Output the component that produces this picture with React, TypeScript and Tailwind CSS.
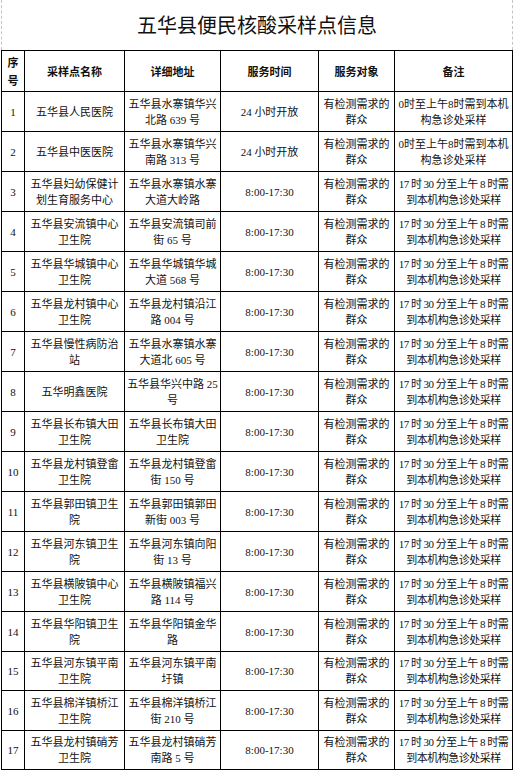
import React from "react";

type Site = {
  name: string[];
  addr: string[];
  allDay?: boolean;
  h?: string;
};

const sites: Site[] = [
  { name: ["五华县人民医院"], addr: ["五华县水寨镇华兴", "北路 639 号"], allDay: true },
  { name: ["五华县中医医院"], addr: ["五华县水寨镇华兴", "南路 313 号"], allDay: true },
  { name: ["五华县妇幼保健计", "划生育服务中心"], addr: ["五华县水寨镇水寨", "大道大岭路"] },
  { name: ["五华县安流镇中心", "卫生院"], addr: ["五华县安流镇司前", "街 65 号"] },
  { name: ["五华县华城镇中心", "卫生院"], addr: ["五华县华城镇华城", "大道 568 号"] },
  { name: ["五华县龙村镇中心", "卫生院"], addr: ["五华县龙村镇沿江", "路 004 号"] },
  { name: ["五华县慢性病防治", "站"], addr: ["五华县水寨镇水寨", "大道北 605 号"] },
  { name: ["五华明鑫医院"], addr: ["五华县华兴中路 25", "号"] },
  { name: ["五华县长布镇大田", "卫生院"], addr: ["五华县长布镇大田", "卫生院"] },
  { name: ["五华县龙村镇登畲", "卫生院"], addr: ["五华县龙村镇登畲", "街 150 号"] },
  { name: ["五华县郭田镇卫生", "院"], addr: ["五华县郭田镇郭田", "新街 003 号"] },
  { name: ["五华县河东镇卫生", "院"], addr: ["五华县河东镇向阳", "街 13 号"] },
  { name: ["五华县横陂镇中心", "卫生院"], addr: ["五华县横陂镇福兴", "路 114 号"] },
  { name: ["五华县华阳镇卫生", "院"], addr: ["五华县华阳镇金华", "路"] },
  { name: ["五华县河东镇平南", "卫生院"], addr: ["五华县河东镇平南", "圩镇"], h: "h-[39px]" },
  { name: ["五华县棉洋镇桥江", "卫生院"], addr: ["五华县棉洋镇桥江", "街 210 号"] },
  { name: ["五华县龙村镇硝芳", "卫生院"], addr: ["五华县龙村镇硝芳", "南路 5 号"], h: "h-[39px]" },
];

function Lines({ lines, tight }: { lines: string[]; tight?: boolean }) {
  return (
    <>
      {lines.map((l, i) => (
        <div key={i} className={tight ? "whitespace-nowrap tracking-[-0.5px]" : "whitespace-nowrap"}>
          {l}
        </div>
      ))}
    </>
  );
}

const cell = "border-r border-b border-black p-0 text-center align-middle";

export default function App() {
  return (
    <div className="w-[514px] min-h-[771px] bg-white text-[#111] [font-family:'Liberation_Serif','Noto_Sans_CJK_SC',serif]">
      <div className="ml-[1px] flex h-[50px] w-[512px] items-center justify-center border-x border-dashed border-[#c4c4c4] text-[20px] [font-family:'Noto_Sans_CJK_SC',sans-serif]">
        五华县便民核酸采样点信息
      </div>
      <table className="ml-[1px] w-[512px] table-fixed border-separate border-spacing-0 border-l border-t border-black text-[11px] leading-[16px]">
        <colgroup>
          <col className="w-[23px]" />
          <col className="w-[100px]" />
          <col className="w-[96px]" />
          <col className="w-[98px]" />
          <col className="w-[76px]" />
          <col className="w-[118px]" />
        </colgroup>
        <thead>
          <tr className="h-[41px] font-bold [font-family:'Noto_Sans_CJK_SC',sans-serif]">
            <th className={`${cell} leading-[18px]`}>
              <div>序</div>
              <div>号</div>
            </th>
            <th className={cell}>采样点名称</th>
            <th className={cell}>详细地址</th>
            <th className={cell}>服务时间</th>
            <th className={cell}>服务对象</th>
            <th className={cell}>备注</th>
          </tr>
        </thead>
        <tbody>
          {sites.map((s, i) => (
            <tr key={i} className={s.h ?? "h-[40px]"}>
              <td className={cell}>{i + 1}</td>
              <td className={cell}>
                <Lines lines={s.name} />
              </td>
              <td className={cell}>
                <Lines lines={s.addr} />
              </td>
              <td className={`${cell} whitespace-nowrap`}>
                {s.allDay ? "24 小时开放" : "8:00-17:30"}
              </td>
              <td className={cell}>
                <Lines lines={["有检测需求的", "群众"]} />
              </td>
              <td className={cell}>
                <Lines
                  tight={!s.allDay}
                  lines={
                    s.allDay
                      ? ["0时至上午8时需到本机", "构急诊处采样"]
                      : ["17 时 30 分至上午 8 时需", "到本机构急诊处采样"]
                  }
                />
              </td>
            </tr>
          ))}
        </tbody>
      </table>
    </div>
  );
}
